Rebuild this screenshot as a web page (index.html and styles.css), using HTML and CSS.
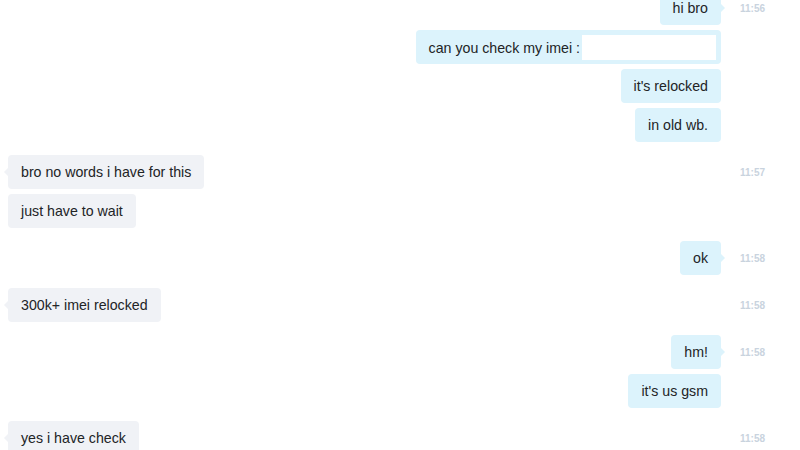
FILE: index.html
```html
<!DOCTYPE html>
<html>
<head>
<meta charset="utf-8">
<link rel="stylesheet" href="styles.css">
</head>
<body>
<div class="chat">
  <div class="group out">
    <div class="msgs">
      <div class="bubble tail">hi bro</div>
      <div class="bubble imei">can you check my imei :<span class="blank"></span></div>
      <div class="bubble">it's relocked</div>
      <div class="bubble">in old wb.</div>
    </div>
    <div class="time">11:56</div>
  </div>
  <div class="group in">
    <div class="msgs">
      <div class="bubble tail">bro no words i have for this</div>
      <div class="bubble">just have to wait</div>
    </div>
    <div class="time">11:57</div>
  </div>
  <div class="group out">
    <div class="msgs">
      <div class="bubble tail">ok</div>
    </div>
    <div class="time">11:58</div>
  </div>
  <div class="group in">
    <div class="msgs">
      <div class="bubble tail">300k+ imei relocked</div>
    </div>
    <div class="time">11:58</div>
  </div>
  <div class="group out">
    <div class="msgs">
      <div class="bubble tail">hm!</div>
      <div class="bubble">it's us gsm</div>
    </div>
    <div class="time">11:58</div>
  </div>
  <div class="group in">
    <div class="msgs">
      <div class="bubble tail">yes i have check</div>
    </div>
    <div class="time">11:58</div>
  </div>
</div>
</body>
</html>
```
FILE: styles.css
```css
html, body {
  margin: 0;
  padding: 0;
  background: #ffffff;
  overflow: hidden;
}
body {
  width: 800px;
  height: 450px;
  font-family: "Liberation Sans", Arial, sans-serif;
  color: #222426;
}
.chat {
  display: flex;
  flex-direction: column;
  gap: 13px;
  margin-top: -9px;
  padding-left: 8px;
}
.group {
  display: grid;
  grid-template-columns: 1fr 79px;
  align-items: start;
}
.msgs {
  display: flex;
  flex-direction: column;
  gap: 5px;
}
.out .msgs { align-items: flex-end; }
.in .msgs { align-items: flex-start; }
.bubble {
  position: relative;
  font-size: 14.2px;
  line-height: 20px;
  padding: 7px 13px;
  border-radius: 4px;
  white-space: nowrap;
}
.out .bubble { background: #dcf3fc; }
.in .bubble { background: #f0f2f6; }
.bubble.tail::after {
  content: "";
  position: absolute;
  top: 13px;
  width: 0;
  height: 0;
  border-top: 4px solid transparent;
  border-bottom: 4px solid transparent;
}
.out .bubble.tail::after {
  right: -4px;
  border-left: 4px solid #dcf3fc;
}
.in .bubble.tail::after {
  left: -4px;
  border-right: 4px solid #f0f2f6;
}
.bubble.imei {
  display: flex;
  align-items: center;
  padding: 5px 5px 4px 13px;
}
.blank {
  display: inline-block;
  width: 134px;
  height: 25px;
  margin-left: 2px;
  background: #ffffff;
}
.time {
  padding-left: 19px;
  padding-top: 12px;
  font-size: 10px;
  line-height: 12px;
  font-weight: bold;
  color: #c9d3de;
}
```
